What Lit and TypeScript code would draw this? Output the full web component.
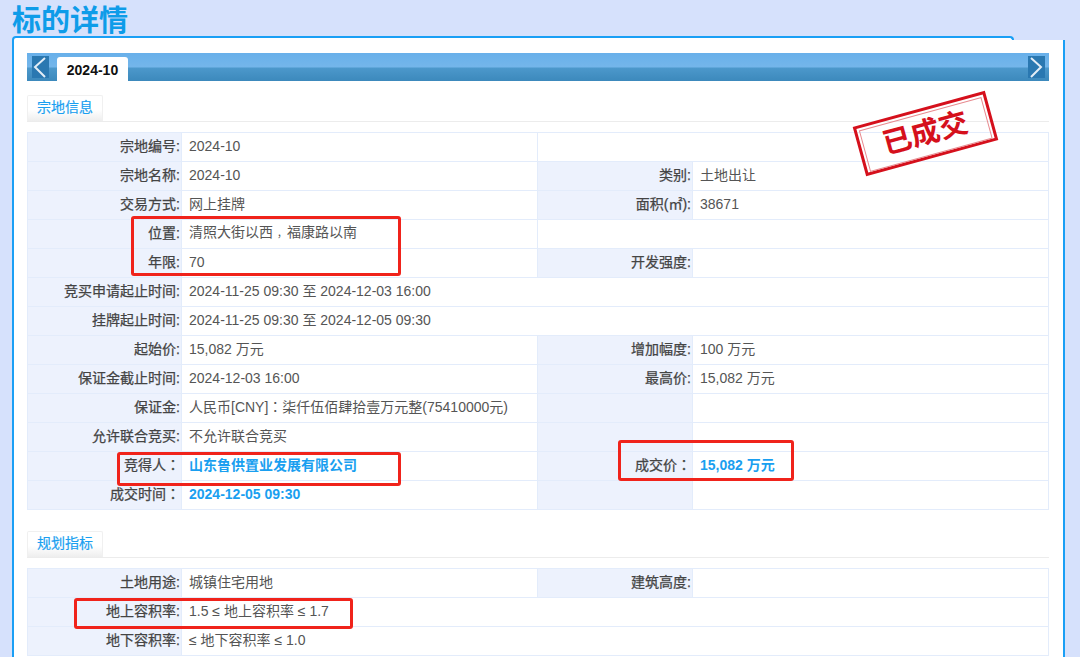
import { LitElement, html, css } from "lit";
import { customElement } from "lit/decorators.js";

type Row = { a: string; b: string; c?: string; d?: string; span?: boolean; full?: boolean; hi?: boolean };

const land: Row[] = [
  { a: "宗地编号:", b: "2024-10", span: true },
  { a: "宗地名称:", b: "2024-10", c: "类别:", d: "土地出让" },
  { a: "交易方式:", b: "网上挂牌", c: "面积(㎡):", d: "38671" },
  { a: "位置:", b: "清照大街以西，福康路以南", span: true },
  { a: "年限:", b: "70", c: "开发强度:", d: "" },
  { a: "竞买申请起止时间:", b: "2024-11-25 09:30 至 2024-12-03 16:00", full: true },
  { a: "挂牌起止时间:", b: "2024-11-25 09:30 至 2024-12-05 09:30", full: true },
  { a: "起始价:", b: "15,082 万元", c: "增加幅度:", d: "100 万元" },
  { a: "保证金截止时间:", b: "2024-12-03 16:00", c: "最高价:", d: "15,082 万元" },
  { a: "保证金:", b: "人民币[CNY]：柒仟伍佰肆拾壹万元整(75410000元)", c: "", d: "" },
  { a: "允许联合竞买:", b: "不允许联合竞买", c: "", d: "" },
  { a: "竞得人：", b: "山东鲁供置业发展有限公司", c: "成交价：", d: "15,082 万元", hi: true },
  { a: "成交时间：", b: "2024-12-05 09:30", c: "", d: "", hi: true },
];

const plan: Row[] = [
  { a: "土地用途:", b: "城镇住宅用地", c: "建筑高度:", d: "" },
  { a: "地上容积率:", b: "1.5 ≤ 地上容积率 ≤ 1.7", full: true },
  { a: "地下容积率:", b: "≤ 地下容积率 ≤ 1.0", full: true },
];

@customElement("app-root")
export class AppRoot extends LitElement {
  static styles = css`
    :host {
      display: block;
      position: relative;
      width: 1080px;
      height: 657px;
      overflow: hidden;
      background: #d6e1fc;
      font-family: "Liberation Sans", "Noto Sans CJK SC", sans-serif;
      font-size: 14px;
      color: #555;
    }
    h1 {
      margin: 0 0 0 12px;
      height: 36px;
      font-size: 29px;
      line-height: 42px;
      font-weight: 700;
      color: #0e9ce9;
    }
    .cap {
      box-sizing: border-box;
      width: 1002px;
      height: 4px;
      margin-left: 12px;
      background: #fff;
      border: 2px solid #1a9ff5;
      border-bottom: 0;
      border-radius: 6px 6px 0 0;
    }
    .card {
      box-sizing: border-box;
      width: 1053px;
      height: 640px;
      margin-left: 12px;
      padding: 13px 14px 0 13px;
      background: #fff;
      border-left: 2px solid #1a9ff5;
      border-right: 2px solid #1a9ff5;
    }
    .tabbar {
      height: 28px;
      display: flex;
      align-items: flex-end;
      justify-content: space-between;
      padding: 0 4px 0 5px;
      background: linear-gradient(#68b0ea 0, #74b6ea 14px, #4c98cb 15px, #3c89bc 28px);
    }
    .arrow {
      width: 17px;
      height: 22px;
      margin-bottom: 3px;
      background: #2a78b1;
      display: block;
    }
    .arrow svg { display: block; }
    .left { display: flex; align-items: flex-end; gap: 8px; }
    .tab {
      height: 24px;
      width: 71px;
      background: #fff;
      border-radius: 3px 3px 0 0;
      text-align: center;
      line-height: 26px;
      font-weight: 700;
      color: #111;
    }
    .section {
      height: 26px;
      margin-top: 14px;
      border-bottom: 1px solid #ececec;
      display: flex;
    }
    .section.second { margin-top: 21px; }
    .section span {
      box-sizing: border-box;
      height: 26px;
      padding: 0 9px;
      line-height: 23px;
      color: #1a9ff0;
      -webkit-text-stroke: 0.2px #1a9ff0;
      background: linear-gradient(#fff 55%, #eeeeee);
      border: 1px solid #f0f0f0;
      border-bottom: 0;
      border-radius: 2px 2px 0 0;
    }
    table {
      width: 1022px;
      margin-top: 10px;
      border-collapse: collapse;
      table-layout: fixed;
    }
    th, td {
      height: 25px;
      padding: 0 0 3px;
      border: 1px solid #e3ecfb;
      white-space: nowrap;
      line-height: 20px;
    }
    th {
      padding-right: 1px;
      text-align: right;
      font-weight: 400;
      color: #444;
      -webkit-text-stroke: 0.25px #444;
      background: #edf2fd;
    }
    td { padding-left: 7px; text-align: left; color: #555; }
    .hi td { color: #1a9ff0; font-weight: 700; }
    .comma { padding-left: 4px; font-size: 10px; }
    .colon { font-family: "Noto Sans CJK TC", sans-serif; }
    .mark {
      position: absolute;
      box-sizing: border-box;
      border: 3px solid #f0231b;
      border-radius: 3px;
    }
    .stamp {
      position: absolute;
      left: 857px;
      top: 108px;
      box-sizing: border-box;
      width: 137px;
      height: 51px;
      transform: rotate(-15.3deg);
      border: 3px solid #d5101c;
      padding: 2px;
      color: #d5101c;
      font-size: 29px;
      font-weight: 700;
      line-height: 38px;
      text-align: center;
    }
    .stamp div { height: 100%; border: 1px solid #e78a8f; }
  `;

  private chevron(points: string) {
    return html`<svg width="17" height="22" viewBox="0 0 17 22">
      <polyline points=${points} fill="none" stroke="#e3edf6" stroke-width="2"></polyline>
    </svg>`;
  }

  private text(value = "") {
    return value.split(/([，：])/).map((part) =>
      part === "，"
        ? html`<span class="comma">${part}</span>`
        : part === "："
          ? html`<span class="colon">${part}</span>`
          : part
    );
  }

  private table(rows: Row[]) {
    return html`<table>
      <colgroup>
        <col style="width:154px" /><col style="width:356px" /><col style="width:155px" /><col />
      </colgroup>
      ${rows.map((r) => {
        const cls = r.hi ? "hi" : "";
        if (r.full) return html`<tr class=${cls}><th>${r.a}</th><td colspan="3">${r.b}</td></tr>`;
        if (r.span) return html`<tr class=${cls}><th>${r.a}</th><td>${this.text(r.b)}</td><td colspan="2"></td></tr>`;
        return html`<tr class=${cls}>
          <th>${this.text(r.a)}</th><td>${this.text(r.b)}</td><th>${this.text(r.c)}</th><td>${r.d}</td>
        </tr>`;
      })}
    </table>`;
  }

  render() {
    return html`
      <h1>标的详情</h1>
      <div class="cap"></div>
      <div class="card">
        <div class="tabbar">
          <div class="left">
            <span class="arrow">${this.chevron("13,2 3,11 13,21")}</span>
            <div class="tab">2024-10</div>
          </div>
          <span class="arrow">${this.chevron("3,2 13,11 3,21")}</span>
        </div>
        <div class="section"><span>宗地信息</span></div>
        ${this.table(land)}
        <div class="section second"><span>规划指标</span></div>
        ${this.table(plan)}
      </div>
      <div class="stamp"><div>已成交</div></div>
      <div class="mark" style="left:131px;top:216px;width:270px;height:60px"></div>
      <div class="mark" style="left:117px;top:452px;width:284px;height:34px"></div>
      <div class="mark" style="left:618px;top:440px;width:176px;height:41px"></div>
      <div class="mark" style="left:74px;top:598px;width:279px;height:31px"></div>
    `;
  }
}
